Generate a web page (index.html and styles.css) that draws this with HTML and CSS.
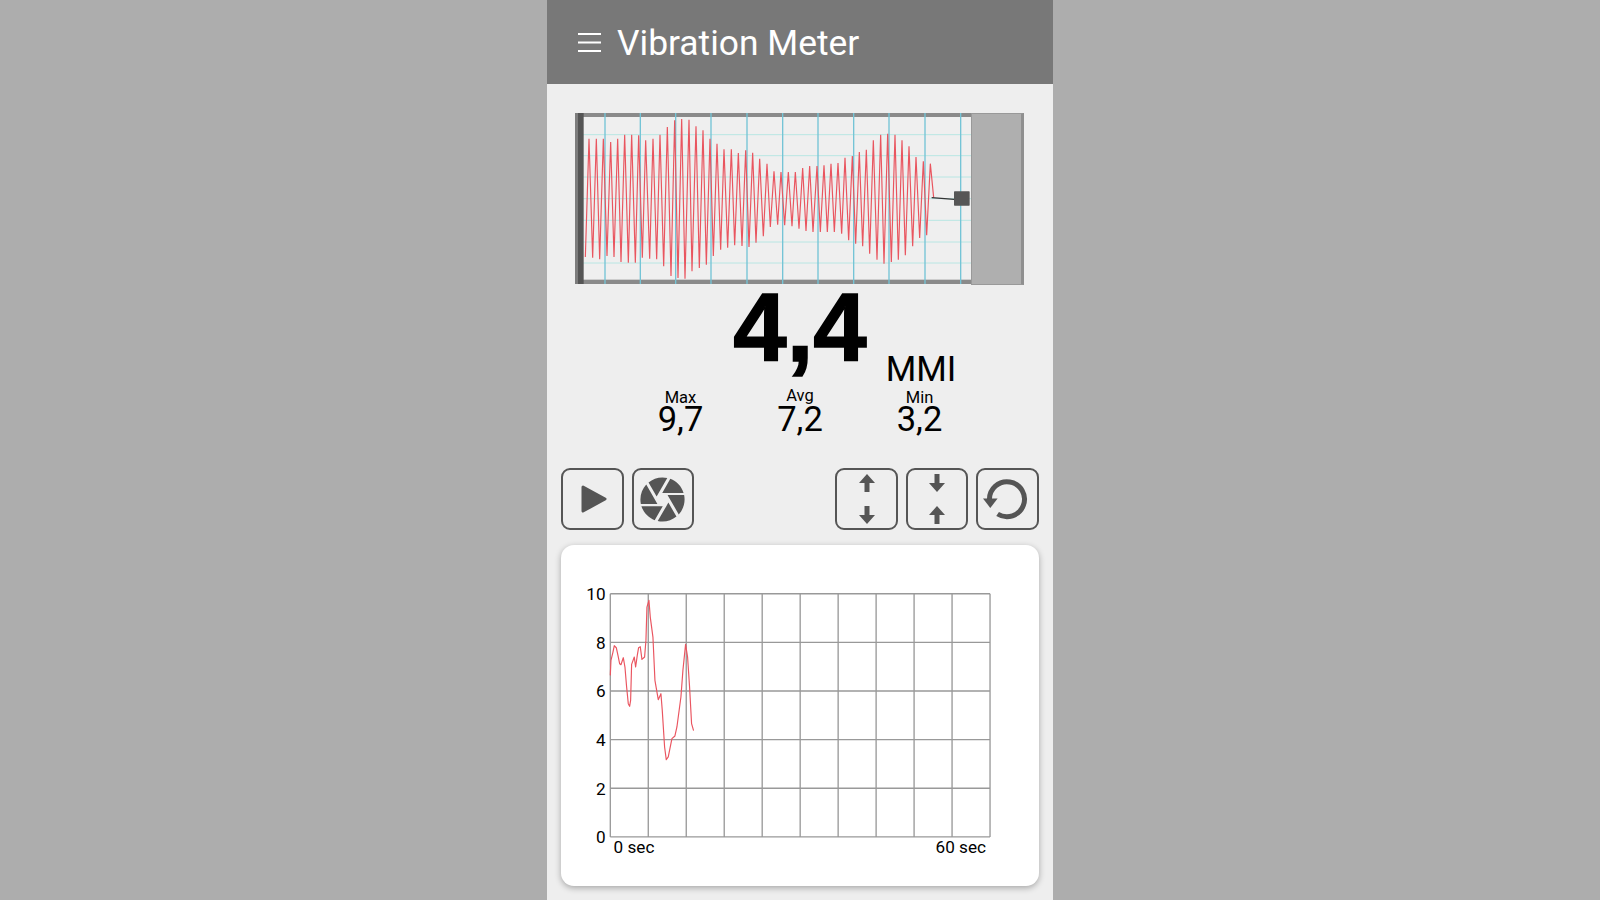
FILE: index.html
```html
<!DOCTYPE html>
<html lang="en">
<head>
  <meta charset="UTF-8">
  <title>Vibration Meter</title>
  <link rel="stylesheet" href="styles.css">
</head>
<body>
  <div class="phone">
    <header class="appbar">
      <svg class="menu-icon" width="23" height="20" viewBox="0 0 23 20">
        <path d="M0 2H23M0 10.500H23M0 19H23" />
      </svg>
      <h1 class="title">Vibration Meter</h1>
    </header>

    <section class="meter">
      <svg class="paper" width="396" height="171" viewBox="87 338 1188 513">
        <rect class="paper-bg" x="87" y="338" width="1188" height="513" />
        <path class="rule-h" d="M87 403H1275M87 466H1275M87 530H1275M87 595H1275M87 660H1275M87 725H1275M87 788H1275" />
        <rect class="frame" x="87" y="338" width="1188" height="12" />
        <rect class="frame" x="87" y="838" width="1188" height="13" />
        <rect class="frame-left" x="87" y="338" width="26" height="513" />
        <rect class="frame-edge" x="87" y="338" width="9" height="513" />
        <path class="rule-v" d="M177 338V851M283 338V851M389 338V851M495 338V851M603 338V851M710 338V851M816 338V851M923 338V851M1029 338V851M1137 338V851M1244 338V851" />
        <polyline class="wave" points="118,770 129,415 140,772 151,415 161,777 172,415 183,767 194,425 204,770 215,415 225,785 236,403 247,787 257,403 268,787 278,405 289,772 299,420 311,775 321,415 332,777 342,403 353,798 364,380 375,827 386,360 396,833 407,356 417,835 429,358 438,813 450,378 460,803 471,390 481,793 492,415 502,767 513,430 524,748 534,447 545,742 556,447 566,735 577,458 588,737 599,450 609,740 620,457 630,727 641,475 652,708 663,490 673,680 684,513 695,673 705,515 716,675 727,515 738,678 748,515 759,685 770,503 780,692 791,497 801,695 813,497 823,695 834,495 844,695 855,490 865,695 876,488 887,700 897,472 908,720 919,467 929,730 940,455 950,738 961,448 971,760 982,420 993,778 1004,403 1014,790 1025,400 1036,785 1047,403 1057,778 1068,420 1078,765 1089,438 1100,738 1110,470 1121,713 1132,483 1142,705 1153,490 1163,592" />
        <path class="stylus" d="M1157 592L1225 597" />
        <rect class="sensor" x="1224" y="573" width="47" height="43" rx="2" />
      </svg>
      <div class="drum"></div>
    </section>

    <section class="readout">
      <div></div>
      <div class="value">4,4</div>
      <div class="unit">MMI</div>
    </section>

    <section class="stats">
      <div class="stat">
        <div class="stat-label">Max</div>
        <div class="stat-value">9,7</div>
      </div>
      <div class="stat">
        <div class="stat-label stat-label-high">Avg</div>
        <div class="stat-value">7,2</div>
      </div>
      <div class="stat">
        <div class="stat-label">Min</div>
        <div class="stat-value">3,2</div>
      </div>
    </section>

    <section class="toolbar">
      <button class="tool">
        <svg width="30" height="34" viewBox="0 0 30 34"><path class="solid" d="M6 5L28 17L6 29Z" /></svg>
      </button>
      <button class="tool">
        <svg width="53" height="53" viewBox="0 0 24 24"><path class="fill" d="M9.4 10.500l4.770-8.260C13.470 2.090 12.750 2 12 2c-2.400 0-4.600.850-6.320 2.250l3.660 6.350.060-.100zM21.540 9c-.920-2.920-3.150-5.260-6-6.340L11.880 9h9.660zm.260 1h-7.490l.290.500 4.760 8.250C21 16.970 22 14.610 22 12c0-.690-.070-1.350-.200-2zM8.540 12l-3.900-6.750C3.010 7.030 2 9.390 2 12c0 .690.070 1.350.200 2h7.490l-1.150-2zm-6.080 3c.920 2.920 3.150 5.260 6 6.340L12.120 15H2.460zm11.270 0l-3.900 6.760c.700.150 1.420.240 2.170.240 2.400 0 4.600-.850 6.320-2.250l-3.660-6.350-.930 1.600z" /></svg>
      </button>
      <button class="tool tool-push">
        <svg width="18" height="52" viewBox="0 0 18 52"><path class="fill" d="M9 1L17 10H11.500V19H6.500V10H1ZM9 51L17 42H11.500V33H6.500V42H1Z" /></svg>
      </button>
      <button class="tool">
        <svg width="18" height="52" viewBox="0 0 18 52"><path class="fill" d="M9 19L17 10H11.500V1H6.500V10H1ZM9 33L17 42H11.500V51H6.500V42H1Z" /></svg>
      </button>
      <button class="tool">
        <svg width="50" height="46" viewBox="0 0 50 46"><path class="arc" d="M6.500 24A17.500 17.500 0 1 1 14.600 38" /><path class="fill" d="M0 22.500H14.600L7.300 32Z" /></svg>
      </button>
    </section>

    <section class="card">
      <svg width="478" height="341" viewBox="44 14 1435 1023">
        <path class="grid" d="M192 160V890M306 160V890M420 160V890M534 160V890M648 160V890M762 160V890M876 160V890M990 160V890M1104 160V890M1218 160V890M1332 160V890M192 160H1332M192 306H1332M192 452H1332M192 598H1332M192 744H1332M192 890H1332" />
        <polyline class="trend" points="192,405 194,360 200,335 204,316 210,322 215,345 220,370 224,373 231,352 236,380 241,440 246,490 250,498 253,480 256,372 264,350 268,380 273,345 277,322 282,319 287,357 295,350 299,300 302,200 308,180 312,230 320,290 326,420 336,478 344,460 348,510 355,620 360,658 366,650 377,595 386,587 392,560 404,470 410,390 418,312 424,350 430,440 436,550 442,571" />
        <text class="axis axis-y" x="178" y="180">10</text>
        <text class="axis axis-y" x="178" y="325">8</text>
        <text class="axis axis-y" x="178" y="471">6</text>
        <text class="axis axis-y" x="178" y="617">4</text>
        <text class="axis axis-y" x="178" y="763">2</text>
        <text class="axis axis-y" x="178" y="908">0</text>
        <text class="axis" x="202" y="939">0 sec</text>
        <text class="axis axis-y" x="1320" y="939">60 sec</text>
      </svg>
    </section>
  </div>
</body>
</html>
```

FILE: styles.css
```css
* { box-sizing: border-box; }
html, body { height: 100%; }
body { margin: 0; background: #adadad; font-family: Roboto, "Liberation Sans", sans-serif; color: #000; overflow: hidden; }
svg { display: block; }

.phone { width: 506px; height: 900px; margin: 0 auto; background: #eee; }

.appbar { display: flex; align-items: center; height: 84px; padding-left: 31px; background: #787878; color: #fff; }
.menu-icon { margin-top: -1px; margin-right: 16px; }
.menu-icon path { stroke: #fff; stroke-width: 2; fill: none; }
.title { margin: 0 0 -2px; font-size: 35.400px; font-weight: 400; }

.meter { display: flex; height: 171px; margin: 29px 0 0 28px; }
.paper-bg { fill: #efefef; }
.rule-h { stroke: #b8e6e3; stroke-width: 3; }
.rule-v { stroke: #74c4d6; stroke-width: 4; }
.frame { fill: #8a8a8a; }
.frame-left { fill: #555; }
.frame-edge { fill: #7c7c7c; }
.wave { fill: none; stroke: #e9555f; stroke-width: 3.500; }
.stylus { stroke: #333; stroke-width: 4; }
.sensor { fill: #565656; }
.drum { width: 53px; height: 172px; background: #afafaf; border: 1px solid #999; border-right: 3px solid #8f8f8f; }

.readout { display: grid; grid-template-columns: 1fr auto 1fr; height: 104px; }
.value { font-family: "Liberation Sans", sans-serif; font-size: 96px; font-weight: 700; line-height: 88px; -webkit-text-stroke: 1.500px #000; }
.unit { margin: 66px 0 0 19px; font-size: 35px; line-height: 40px; }

.stats { display: flex; justify-content: center; }
.stat { width: 119.500px; text-align: center; }
.stat-label { font-size: 16.500px; line-height: 20px; }
.stat-label-high { margin: -2px 0 2px; }
.stat-value { margin-top: -1px; margin-bottom: 1px; font-size: 34.500px; line-height: 24px; }

.toolbar { display: flex; gap: 8px; margin-top: 36px; padding: 0 14px; }
.tool { display: flex; align-items: center; justify-content: center; width: 62.600px; height: 62px; padding: 0; background: none; border: 2px solid #555; border-radius: 9px; }
.tool-push { margin-left: auto; }
.fill { fill: #555; }
.solid { fill: #555; stroke: #555; stroke-width: 3; stroke-linejoin: round; }
.arc { fill: none; stroke: #555; stroke-width: 5; }

.card { width: 478px; height: 341px; margin: 15px 0 0 14px; background: #fff; border-radius: 13px; box-shadow: 0 2px 6px rgba(0, 0, 0, .3); }
.grid { fill: none; stroke: #999; stroke-width: 4; }
.trend { fill: none; stroke: #ea5560; stroke-width: 3.500; stroke-linejoin: round; }
.axis { font-size: 51.500px; fill: #000; }
.axis-y { text-anchor: end; }
```
